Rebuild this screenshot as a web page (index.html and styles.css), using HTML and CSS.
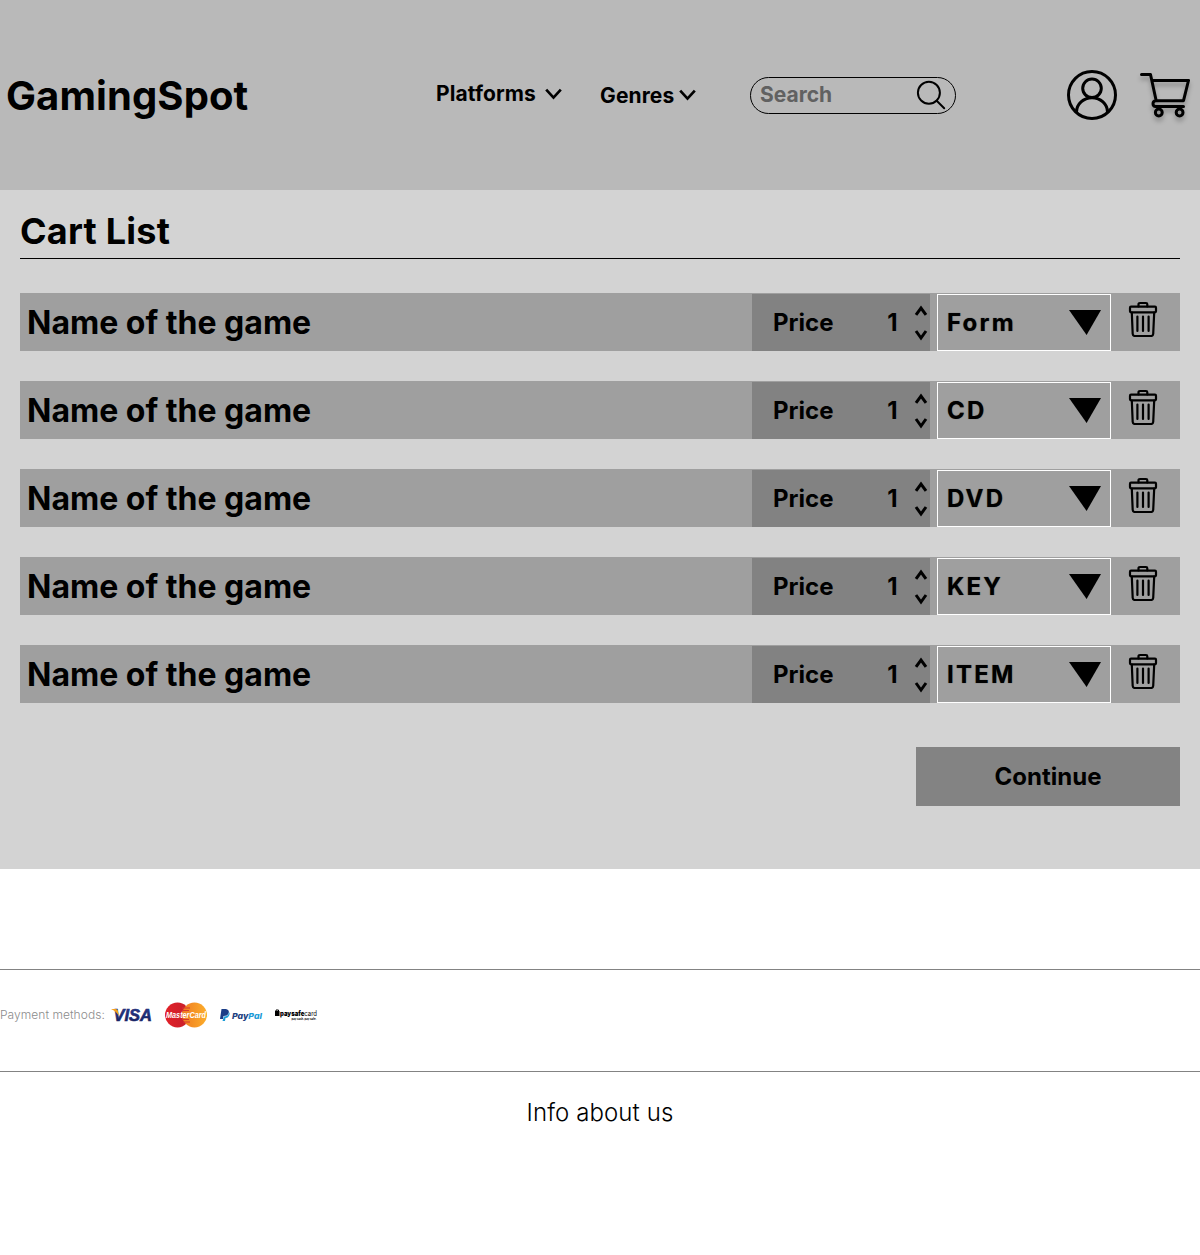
FILE: index.html
```html
<!DOCTYPE html>
<html lang="en">
<head>
<meta charset="utf-8">
<title>GamingSpot - Cart</title>
<link rel="stylesheet" href="styles.css">
</head>
<body>
<svg class="sprite" aria-hidden="true">
  <symbol id="chevron" viewBox="0 0 17 12"><path d="M1.2 1.7 8.5 9.6 15.8 1.7" fill="none" stroke="#000" stroke-width="2.7"/></symbol>
  <symbol id="stepper" viewBox="0 0 14 36"><path d="M2 9.8 7 3 12 9.8M2 26 7 33 12 26" fill="none" stroke="#000" stroke-width="3"/></symbol>
  <symbol id="trash" viewBox="0 0 30 36"><g fill="none" stroke="#000" stroke-width="2.2" stroke-linejoin="round" stroke-linecap="round"><path d="M10.5 5.5V3.3Q10.5 2 12 2H18Q19.3 2 19.3 3.3V5.5"/><rect x="2" y="5.7" width="26" height="5.6" rx="1"/><path d="M3.8 11.5 4.7 33Q4.9 35 7 35H23Q25 35 25.2 33L26.2 11.5M9.4 15.5V30M15 15.5V30M20.6 15.5V30"/></g></symbol>
</svg>
<header class="header">
  <a class="brand">GamingSpot</a>
  <nav class="nav">
    <span class="nav-item">Platforms <svg class="chevron"><use href="#chevron"/></svg></span>
    <span class="nav-item genres">Genres <svg class="chevron"><use href="#chevron"/></svg></span>
  </nav>
  <div class="search"><span>Search</span>
    <svg class="glass" width="30" height="30" viewBox="0 0 30 30"><g fill="none" stroke="#000" stroke-width="2" stroke-linecap="round"><circle cx="12.9" cy="12.7" r="11"/><path d="M20.7 20.7 28.2 28.2"/></g></svg>
  </div>
  <div class="actions">
    <svg width="50" height="50" viewBox="0 0 50 50"><g fill="none" stroke="#000" stroke-width="3"><circle cx="25" cy="25" r="23.5"/><circle cx="25" cy="18.3" r="9.3"/><path d="M9.5 42A15.5 14.3 0 0 1 40.5 42"/></g></svg>
    <svg class="cart" width="52" height="50" viewBox="0 0 52 50"><g fill="none" stroke="#000" stroke-width="3" stroke-linejoin="round" stroke-linecap="round"><path d="M2.5 4.5H11.5L17.2 30.7H44.5L49.5 10.5H13M17 30.8H16.5Q14 31.2 14 33.8T16.7 36.5H44.5"/><circle cx="19.8" cy="42.5" r="3.4"/><circle cx="40.6" cy="42.5" r="3.4"/></g></svg>
  </div>
</header>
<main class="main">
  <h1 class="title">Cart List</h1>
  <ul class="list">
    <li class="row"><span class="name">Name of the game</span><div class="price"><span>Price</span><span class="qty">1</span><svg class="stepper"><use href="#stepper"/></svg></div><div class="select"><span>Form</span><i class="arrow"></i></div><svg class="trash"><use href="#trash"/></svg></li>
    <li class="row"><span class="name">Name of the game</span><div class="price"><span>Price</span><span class="qty">1</span><svg class="stepper"><use href="#stepper"/></svg></div><div class="select"><span>CD</span><i class="arrow"></i></div><svg class="trash"><use href="#trash"/></svg></li>
    <li class="row"><span class="name">Name of the game</span><div class="price"><span>Price</span><span class="qty">1</span><svg class="stepper"><use href="#stepper"/></svg></div><div class="select"><span>DVD</span><i class="arrow"></i></div><svg class="trash"><use href="#trash"/></svg></li>
    <li class="row"><span class="name">Name of the game</span><div class="price"><span>Price</span><span class="qty">1</span><svg class="stepper"><use href="#stepper"/></svg></div><div class="select"><span>KEY</span><i class="arrow"></i></div><svg class="trash"><use href="#trash"/></svg></li>
    <li class="row"><span class="name">Name of the game</span><div class="price"><span>Price</span><span class="qty">1</span><svg class="stepper"><use href="#stepper"/></svg></div><div class="select"><span>ITEM</span><i class="arrow"></i></div><svg class="trash"><use href="#trash"/></svg></li>
  </ul>
  <button class="continue">Continue</button>
</main>
<footer>
  <div class="payments">
    <span class="label">Payment methods:</span>
    <svg width="220" height="30" viewBox="108 1000 220 30">
      <defs>
        <linearGradient id="visa" x1="0" x2="0" y1="0" y2="1"><stop offset="0" stop-color="#2b3f94"/><stop offset="1" stop-color="#141d55"/></linearGradient>
        <linearGradient id="mcRed"><stop offset="0" stop-color="#e22128"/><stop offset="1" stop-color="#c51e2b"/></linearGradient>
        <linearGradient id="mcGold"><stop offset="0" stop-color="#ef7b21"/><stop offset="1" stop-color="#fcae2b"/></linearGradient>
      </defs>
      <text class="visa" x="113.5" y="1021" textLength="38.5" lengthAdjust="spacingAndGlyphs" fill="url(#visa)">VISA</text>
      <path d="M111 1009H115.5Q117.5 1009 118 1011L119 1016Q116 1011 111 1009Z" fill="#f5a01b"/>
      <circle cx="177.5" cy="1015" r="12.5" fill="url(#mcRed)"/>
      <circle cx="194.5" cy="1015" r="12.5" fill="url(#mcGold)"/>
      <path d="M182 1008H190M182 1010.5H189M182 1019.5H189M183 1022H190" stroke="#d9372a" stroke-width="1"/>
      <text class="mc" x="166" y="1018" textLength="40" lengthAdjust="spacingAndGlyphs">MasterCard</text>
      <path d="M221.5 1009H226Q230 1010 228.5 1013.5 227.5 1016 223.5 1016L223 1019H220Z" fill="#1b3d87"/>
      <path d="M224 1016.5Q228.5 1016.5 229 1012 230.5 1014 228.5 1016.5 227.5 1018 225.5 1018L225 1021H222.5Z" fill="#1b9bd7"/>
      <text class="pp" x="232" y="1018.6" textLength="30" lengthAdjust="spacingAndGlyphs"><tspan fill="#22407f">Pay</tspan><tspan fill="#1b9bd7">Pal</tspan></text>
      <rect x="275" y="1011" width="4.5" height="5"/><path d="M276 1011.5V1010H278.5V1011.5" fill="none" stroke="#000"/>
      <text class="psc" x="280" y="1015.5" textLength="37" lengthAdjust="spacingAndGlyphs"><tspan font-weight="900">paysafe</tspan>card</text>
      <text class="psc-sub" x="291.5" y="1020.3" textLength="25" lengthAdjust="spacingAndGlyphs">pay cash. pay safe.</text>
    </svg>
  </div>
  <p class="info">Info about us</p>
</footer>
</body>
</html>
```
FILE: styles.css
```css
* { box-sizing: border-box; }
body { margin: 0; background: #fff; color: #000; font-family: Inter, "Liberation Sans", sans-serif; }
.sprite { display: block; width: 0; height: 0; }
svg { flex: none; }
.header { display: flex; align-items: center; height: 190px; padding: 0 9px 0 6px; background: #b9b9b9; }
.brand { width: 430px; font-size: 40px; font-weight: 700; line-height: 48px; padding-top: 2px; letter-spacing: .1px; }
.nav { display: flex; width: 314px; font-size: 21px; font-weight: 700; line-height: 24px; letter-spacing: .12px; }
.nav-item { display: flex; align-items: center; justify-content: space-between; width: 126px; margin-bottom: 2px; }
.nav-item.genres { width: 96px; margin: 2px 0 0 38px; }
.chevron { width: 17px; height: 12px; }
.genres .chevron { margin-bottom: 2px; }
.search { display: flex; align-items: center; justify-content: space-between; width: 206px; height: 37px; padding: 0 9px 1px; border: 1px solid #000; border-radius: 19px; color: #616161; font-size: 21px; font-weight: 700; line-height: 24px; }
.search span { padding-top: 1px; }
.actions { display: flex; gap: 22px; margin-left: auto; }
.cart { filter: drop-shadow(0 4px 2px rgba(0, 0, 0, .25)); overflow: visible; }
.main { height: 679px; padding: 19px 20px 0; background: #d3d3d3; }
.title { height: 50px; margin: 0 0 34px; border-bottom: 1px solid #000; font-size: 36px; font-weight: 700; line-height: 45px; letter-spacing: .22px; }
.list { display: flex; flex-direction: column; gap: 30px; margin: 0; padding: 0; list-style: none; }
.row { display: flex; align-items: flex-end; height: 58px; background: #9f9f9f; font-size: 24px; font-weight: 700; }
.name { width: 732px; padding-left: 7px; font-size: 32px; line-height: 57px; }
.price { display: flex; align-items: center; width: 178px; height: 57px; padding-left: 21px; background: #828282; }
.qty { margin-left: auto; }
.stepper { width: 14px; height: 36px; margin: 0 2px 0 16.5px; }
.select { display: flex; align-items: center; justify-content: space-between; width: 174px; height: 57px; margin-left: 7px; padding: 0 9px; border: 1px solid #fff; letter-spacing: 2.2px; text-shadow: 0 0 1px rgba(0, 0, 0, .6); }
.arrow { width: 32px; height: 25px; background: #000; clip-path: polygon(0 0, 100% 0, 55% 100%); }
.trash { width: 30px; height: 36px; margin: 0 0 14px 17px; }
.continue { display: block; width: 264px; height: 59px; margin: 44px 0 0 auto; padding: 0; border: 0; background: #838383; color: #000; font: 700 24px Inter, sans-serif; }
.payments { display: flex; align-items: center; gap: 3px; height: 103px; margin-top: 100px; padding-bottom: 12px; border-top: 1px solid #838383; border-bottom: 1px solid #838383; }
.label { width: 105px; color: #8c8c8c; font-size: 12px; font-weight: 300; letter-spacing: .05px; white-space: nowrap; }
.visa { font: italic 700 16.5px "Liberation Sans", sans-serif; stroke: #1d2a70; stroke-width: .6px; }
.mc { font: italic 700 8.5px "Liberation Sans", sans-serif; fill: #fff; }
.pp { font: italic 800 8px Inter, sans-serif; }
.psc { font: 400 7px Inter, sans-serif; }
.psc-sub { font: 700 3px Inter, sans-serif; }
.info { margin: 26px 0 0; font-size: 24px; font-weight: 300; line-height: 29px; letter-spacing: .1px; text-align: center; }
```
